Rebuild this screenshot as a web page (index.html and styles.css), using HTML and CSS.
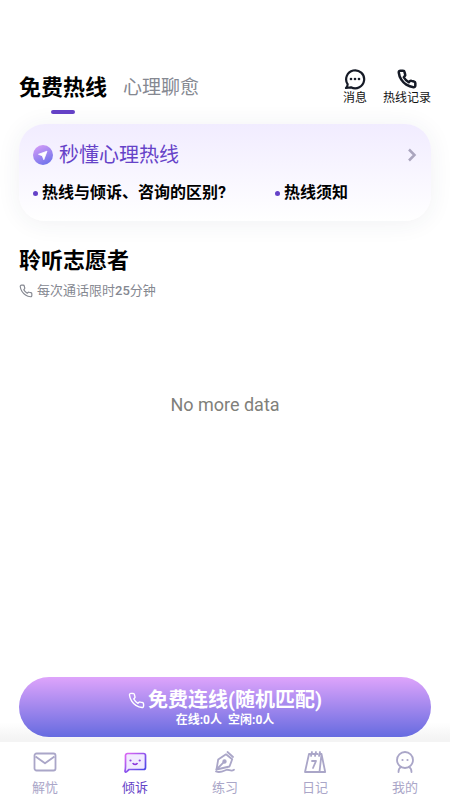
FILE: index.html
```html
<!DOCTYPE html>
<html lang="zh-CN">
<head>
<meta charset="utf-8">
<meta name="viewport" content="width=device-width, initial-scale=1">
<title>免费热线</title>
<link rel="stylesheet" href="styles.css">
</head>
<body>
<svg class="defs" width="0" height="0" aria-hidden="true">
  <defs>
    <linearGradient id="badge" x1="0" y1="0" x2="0.5" y2="1"><stop offset="0" stop-color="#dc9ff8"/><stop offset="1" stop-color="#7676ec"/></linearGradient>
    <linearGradient id="chat" x1="0" y1="0" x2="1" y2="1"><stop offset="0.1" stop-color="#d665f2"/><stop offset="0.85" stop-color="#5148e8"/></linearGradient>
    <symbol id="phone" viewBox="0 0 24 24"><path d="M22 16.9v3a2 2 0 0 1-2.2 2 19.8 19.8 0 0 1-8.6-3.1 19.500 19.500 0 0 1-6-6A19.800 19.800 0 0 1 2.100 4.200 2 2 0 0 1 4.100 2h3a2 2 0 0 1 2 1.700c.1 1 .4 1.900.7 2.800a2 2 0 0 1-.5 2.100L8.100 9.900a16 16 0 0 0 6 6l1.300-1.300a2 2 0 0 1 2.100-.4c.9.3 1.800.600 2.800.7a2 2 0 0 1 1.700 2z"/></symbol>
  </defs>
</svg>
<header class="header">
  <nav class="tabs">
    <a class="tab tab-active" href="#">免费热线</a>
    <a class="tab" href="#">心理聊愈</a>
  </nav>
  <div class="actions">
    <button class="action" type="button">
      <svg width="22" height="22" viewBox="0 0 22 22" fill="none" stroke="#151a26" stroke-width="2.200" stroke-linejoin="round"><path d="M3.600 16.200A9 9 0 1 1 7 19.300L2 20c1.200-1.200 1.700-2.500 1.600-3.800z"/><g fill="#151a26" stroke="none"><circle cx="7" cy="11" r="1.300"/><circle cx="11" cy="11" r="1.300"/><circle cx="15" cy="11" r="1.300"/></g></svg>
      <span>消息</span>
    </button>
    <button class="action" type="button">
      <svg class="phone-dark" width="22" height="22"><use href="#phone"/></svg>
      <span>热线记录</span>
    </button>
  </div>
</header>
<main class="main">
  <section class="card">
    <a class="card-head" href="#">
      <svg width="20" height="20" viewBox="0 0 20 20"><circle cx="10" cy="10" r="10" fill="url(#badge)"/><path d="M14 6.200 5.500 9.300l3.800 1.500 1.500 3.900z" fill="#fff" stroke="#fff" stroke-width=".8" stroke-linejoin="round"/></svg>
      <span class="card-title">秒懂心理热线</span>
      <svg width="10" height="14" viewBox="0 0 10 14" fill="none" stroke="#aaa5be" stroke-width="2.500"><path d="m2 1.500 5.500 5.500L2 12.500"/></svg>
    </a>
    <ul class="links">
      <li><a href="#">热线与倾诉、咨询的区别?</a></li>
      <li><a href="#">热线须知</a></li>
    </ul>
  </section>
  <h1 class="title">聆听志愿者</h1>
  <p class="note"><svg class="phone-gray" width="14" height="14"><use href="#phone"/></svg><span>每次通话限时<b>25</b>分钟</span></p>
  <p class="empty">No more data</p>
</main>
<footer class="footer">
  <div class="connect-wrap">
    <button class="connect" type="button">
      <span class="connect-title"><svg class="phone-white" width="17" height="17"><use href="#phone"/></svg>免费连线(随机匹配)</span>
      <span class="connect-status"><span>在线:0人</span><span>空闲:0人</span></span>
    </button>
  </div>
  <nav class="tabbar">
    <a class="item" href="#">
      <svg width="24" height="24" viewBox="0 0 24 24" fill="none" stroke="#aaa6c8" stroke-width="1.800" stroke-linejoin="round"><rect x="1.500" y="3.500" width="21" height="17" rx="2"/><path d="M2.500 6.500 12 13.300l9.500-6.800"/></svg>
      <span>解忧</span>
    </a>
    <a class="item item-active" href="#">
      <svg width="24" height="24" viewBox="0 0 24 24" fill="none"><path d="M4.500 3.500h16a2 2 0 0 1 2 2v12a2 2 0 0 1-2 2H6l-2.600 2.300c-.7.500-1.600.1-1.400-.8.300-1.500.5-2.500.5-4.500v-11a2 2 0 0 1 2-2z" fill="#f1eaff" stroke="url(#chat)" stroke-width="1.700" stroke-linejoin="round"/><path d="M9.800 13c.8 1.800 3.800 1.800 4.600 0" stroke="#8a35dc" stroke-width="1.700"/><circle cx="7.500" cy="10.500" r="1.100" fill="#8b45e0"/><circle cx="16.700" cy="10.500" r="1.100" fill="#8b45e0"/></svg>
      <span>倾诉</span>
    </a>
    <a class="item" href="#">
      <svg width="24" height="24" viewBox="0 0 24 24" fill="none" stroke="#aaa6c8" stroke-width="1.800" stroke-linecap="round" stroke-linejoin="round"><path d="M3.500 19.500 5.200 9.500 13 4.300l6.200 5-2.700 7.200z"/><path d="m3.500 19.500 7.300-7.300M14.500 2l5.500 5M3 21.500c4.500 1.500 7-.2 10-1.500s4.500 2.200 8-.2"/><circle cx="11.500" cy="11.500" r="1.300" fill="#aaa6c8"/></svg>
      <span>练习</span>
    </a>
    <a class="item" href="#">
      <svg width="24" height="24" viewBox="0 0 24 24" fill="none" stroke="#aaa6c8" stroke-width="1.800" stroke-linecap="round" stroke-linejoin="round"><path d="M7 4H6L2 22h14.500L18.500 4h-1.200M10 4h1.500M14 4h.5M18.500 4l3.700 18h-5.700M9 2 8 6M13 2l-1 4M17 2l-1 4M9 11h4l-3 7"/></svg>
      <span>日记</span>
    </a>
    <a class="item" href="#">
      <svg width="24" height="24" viewBox="0 0 24 24" fill="none" stroke="#aaa6c8" stroke-width="1.800" stroke-linecap="round"><circle cx="12" cy="10" r="8"/><path d="M8 17c-1.800 1-2.500 2.500-2.500 5M16 17c1.800 1 2.500 2.500 2.500 5"/><g fill="#aaa6c8" stroke="none"><circle cx="9.500" cy="10" r="1.100"/><circle cx="14.500" cy="10" r="1.100"/></g></svg>
      <span>我的</span>
    </a>
  </nav>
</footer>
</body>
</html>
```
FILE: styles.css
```css
* { box-sizing: border-box; }
body {
  margin: 0;
  min-height: 100vh;
  display: flex;
  flex-direction: column;
  background: #fff;
  color: #000;
  font-family: Roboto, "Noto Sans CJK SC", sans-serif;
}
a { color: inherit; text-decoration: none; }
button { border: 0; padding: 0; background: none; font: inherit; color: inherit; cursor: pointer; }
svg { display: block; flex: none; }
.defs { position: absolute; }

.header {
  display: flex;
  justify-content: space-between;
  align-items: flex-start;
  padding: 68px 19px 0;
}
.tabs { display: flex; gap: 16px; }
.tab {
  padding-top: 4px;
  font-size: 19px;
  line-height: 32px;
  color: #858891;
}
.tab-active {
  display: flex;
  flex-direction: column;
  align-items: center;
  gap: 6px;
  font-size: 22px;
  font-weight: 700;
  color: #000;
}
.tab-active::after {
  content: "";
  width: 24px;
  height: 4px;
  border-radius: 2px;
  background: #6542c8;
}
.actions { display: flex; gap: 16px; }
.action {
  display: flex;
  flex-direction: column;
  align-items: center;
  font-size: 12px;
  line-height: 16px;
  color: #111;
}

.phone-dark, .phone-gray, .phone-white { fill: none; stroke-linejoin: round; }
.phone-dark { stroke: #151a26; stroke-width: 3; padding: 1px; }
.phone-gray { stroke: #858891; stroke-width: 2; }
.phone-white { stroke: #fff; stroke-width: 2; }

.main { flex: 1; padding: 10px 19px 0; }
.card {
  padding: 16px 14px;
  border-radius: 26px;
  background: linear-gradient(#f1ecff, #fff);
  box-shadow: 0 2px 24px rgba(40, 50, 90, 0.07);
}
.card-head { display: flex; align-items: center; gap: 6px; }
.card-title {
  flex: 1;
  font-size: 20px;
  line-height: 30px;
  color: #6542c8;
}
.links {
  display: grid;
  grid-template-columns: 63% 1fr;
  margin: 11px 0 0;
  padding: 0;
  list-style: none;
  font-size: 16px;
  font-weight: 700;
  line-height: 24px;
}
.links li { display: flex; align-items: center; gap: 4px; }
.links li::before {
  content: "";
  width: 5px;
  height: 5px;
  border-radius: 50%;
  background: #6542c8;
}
.title { margin: 24px 0 0; font-size: 22px; line-height: 32px; }
.note {
  display: flex;
  align-items: center;
  gap: 4px;
  margin: 4px 0 0;
  font-size: 13px;
  line-height: 20px;
  color: #858891;
}
.note b { font-weight: 500; }
.empty {
  margin: 92px 0 0;
  font-size: 18px;
  line-height: 24px;
  text-align: center;
  color: #80807a;
}

.connect-wrap {
  padding: 0 19px 5px;
  background: linear-gradient(transparent 70%, #f4f4f4 95%);
}
.connect {
  display: flex;
  flex-direction: column;
  align-items: center;
  width: 100%;
  padding: 10px 0;
  border-radius: 30px;
  background: linear-gradient(#dea4fb, #666be0);
  box-shadow: 0 0 2px #fff;
  color: #fff;
  font-weight: 700;
}
.connect-title {
  display: flex;
  align-items: center;
  gap: 3px;
  font-size: 20px;
  line-height: 26px;
}
.connect-status { display: flex; gap: 6px; font-size: 12px; line-height: 14px; }
.tabbar {
  display: grid;
  grid-template-columns: repeat(5, 1fr);
  padding: 8px 0 2px;
  background: #fff;
}
.item {
  display: flex;
  flex-direction: column;
  align-items: center;
  gap: 4px;
  font-size: 13px;
  line-height: 20px;
  color: #aaa6c8;
}
.item-active { color: #6542c8; }
```
